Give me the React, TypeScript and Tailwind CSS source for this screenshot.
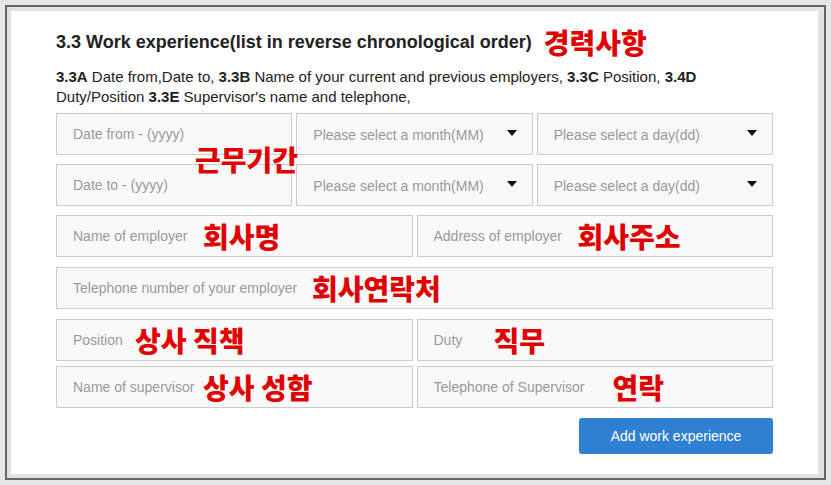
import React from "react";

const field =
  "h-[42px] w-full border border-[#cccccc] bg-[#f9f9f9] pl-4 text-[14px] text-[#333] outline-none placeholder:text-[#999999]";
const note =
  "pointer-events-none absolute top-1/2 -translate-y-1/2 whitespace-nowrap text-[28px] leading-[30px] font-black text-[#e00000]";
const korean = { fontFamily: '"Noto Sans CJK KR", "Noto Sans", sans-serif' };

function Input({ placeholder, label, left }: { placeholder: string; label?: string; left?: number }) {
  return (
    <div className="relative">
      <input className={field} placeholder={placeholder} />
      {label && (
        <span className={note} style={{ ...korean, left }}>
          {label}
        </span>
      )}
    </div>
  );
}

function Select({ placeholder }: { placeholder: string }) {
  return (
    <div className="flex h-[42px] items-center justify-between border border-[#cccccc] bg-[#f9f9f9] pl-4 pr-[15px]">
      <span className="pt-[3px] text-[14px] text-[#999999]">{placeholder}</span>
      <svg width="10" height="6" viewBox="0 0 10 6" className="-mt-[2px]">
        <path d="M0 0h10L5 6z" fill="#111" />
      </svg>
    </div>
  );
}

export default function App() {
  return (
    <div className="h-[485px] w-[831px] bg-[#e6e6e6] p-[5px]" style={{ fontFamily: '"Liberation Sans", Arial, sans-serif' }}>
      <div className="h-full border-2 border-[#666666] bg-[#e2e2e2] pb-[4px] pl-[4px] pr-[6px] pt-[4px]">
        <div className="h-full bg-white px-[45px] pt-[16px]">
          <div className="flex h-[30px] items-center">
            <h2 className="text-[18px] font-bold text-[#222]">3.3 Work experience(list in reverse chronological order)</h2>
            <span className="ml-[12px] text-[28px] font-black leading-[30px] text-[#e00000]" style={korean}>
              경력사항
            </span>
          </div>

          <p className="mt-[10px] text-[15px] leading-[20px] text-[#222]">
            <b>3.3A</b> Date from,Date to, <b>3.3B</b> Name of your current and previous employers, <b>3.3C</b> Position,{" "}
            <b>3.4D</b> Duty/Position <b>3.3E</b> Supervisor's name and telephone,
          </p>

          <div className="relative mt-[6px] flex flex-col gap-[9px]">
            <div className="grid grid-cols-3 gap-[4px]">
              <Input placeholder="Date from - (yyyy)" />
              <Select placeholder="Please select a month(MM)" />
              <Select placeholder="Please select a day(dd)" />
            </div>
            <div className="grid grid-cols-3 gap-[4px]">
              <Input placeholder="Date to - (yyyy)" />
              <Select placeholder="Please select a month(MM)" />
              <Select placeholder="Please select a day(dd)" />
            </div>
            <span
              className="pointer-events-none absolute left-[139px] top-[31px] text-[28px] font-black leading-[30px] text-[#e00000]"
              style={korean}
            >
              근무기간
            </span>
          </div>

          <div className="mt-[9px] grid grid-cols-2 gap-[4px]">
            <Input placeholder="Name of employer" label="회사명" left={147} />
            <Input placeholder="Address of employer" label="회사주소" left={161} />
          </div>

          <div className="mt-[10px]">
            <Input placeholder="Telephone number of your employer" label="회사연락처" left={256} />
          </div>

          <div className="mt-[10px] grid grid-cols-2 gap-[4px]">
            <Input placeholder="Position" label="상사 직책" left={79} />
            <Input placeholder="Duty" label="직무" left={77} />
          </div>

          <div className="mt-[5px] grid grid-cols-2 gap-[4px]">
            <Input placeholder="Name of supervisor" label="상사 성함" left={147} />
            <Input placeholder="Telephone of Supervisor" label="연락" left={196} />
          </div>

          <div className="mt-[10px] flex justify-end">
            <button className="h-[36px] w-[194px] rounded-[3px] bg-[#2f80d2] text-[14px] text-white">Add work experience</button>
          </div>
        </div>
      </div>
    </div>
  );
}
